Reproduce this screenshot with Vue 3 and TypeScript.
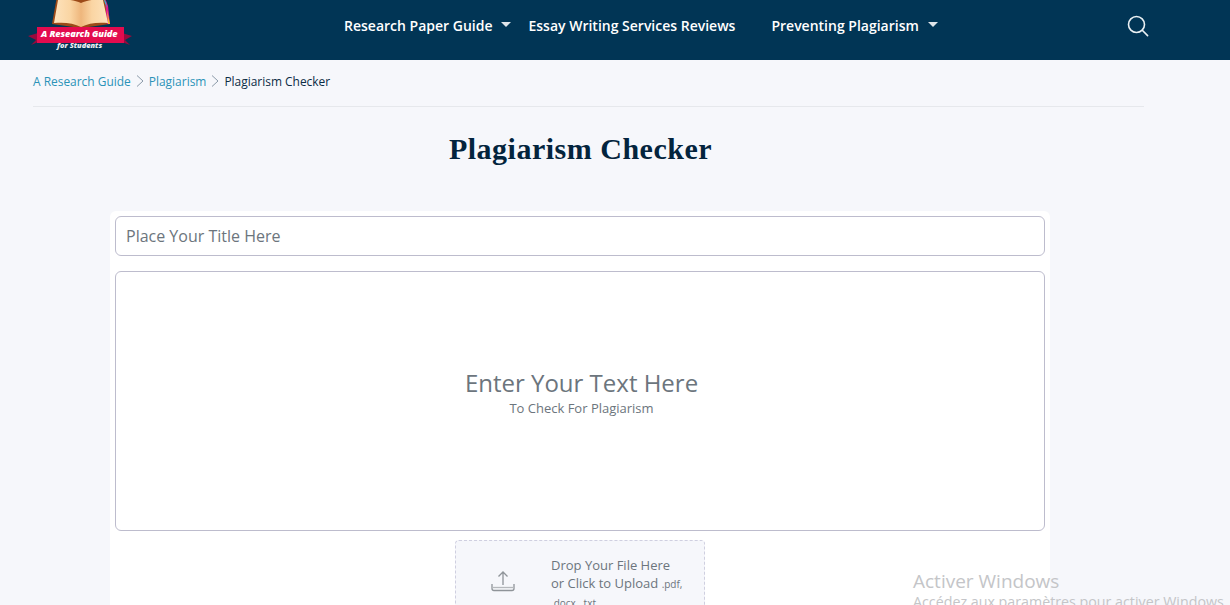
<script setup lang="ts">
interface NavItem { label: string; caret: boolean }
const nav: NavItem[] = [
  { label: 'Research Paper Guide', caret: true },
  { label: 'Essay Writing Services Reviews', caret: false },
  { label: 'Preventing Plagiarism', caret: true },
]
</script>

<template>
  <div class="page">
    <header class="top">
      <a class="logo">
        <svg class="logo-art" width="106" height="50" viewBox="0 0 106 50">
          <defs>
            <linearGradient id="pageLeft" x1="0" y1="0" x2="1" y2="0">
              <stop offset="0" stop-color="#fde3bd" />
              <stop offset="0.6" stop-color="#fad5a3" />
              <stop offset="1" stop-color="#eeb67c" />
            </linearGradient>
            <linearGradient id="pageRight" x1="0" y1="0" x2="1" y2="0">
              <stop offset="0" stop-color="#eeb67c" />
              <stop offset="0.4" stop-color="#fad5a3" />
              <stop offset="1" stop-color="#fde3bd" />
            </linearGradient>
          </defs>
          <path d="M29 -4 L77 -4 L82 24 L53 28 L24 24 Z" fill="#9c4a18" />
          <path d="M77 -2 L80 6 L82 24 L79 24 Z" fill="#e2188f" />
          <path d="M75 -2 L78 2 L79 8 Z" fill="#33b5d8" />
          <path d="M79 10 L82 24 L80 24 Z" fill="#f2c230" />
          <path d="M30 0 C38 -1 47 0 53 3 L53 27 C46 23 36 22 26 23 Z" fill="url(#pageLeft)" />
          <path d="M53 3 C59 0 68 -1 75 0 L80 23 C70 22 60 23 53 27 Z" fill="url(#pageRight)" />
          <path d="M0 36 L10 33 L10 42 L3 45 L8 40 Z" fill="#99093c" />
          <path d="M104 36 L94 33 L94 42 L102 45 L97 40 Z" fill="#99093c" />
          <rect x="9" y="27" width="87" height="16" fill="#e30b4e" />
        </svg>
        <span class="logo-title">A Research Guide</span>
        <span class="logo-sub">for Students</span>
      </a>
      <nav class="nav">
        <a v-for="item in nav" :key="item.label" class="nav-link">
          {{ item.label }}
          <i v-if="item.caret" class="caret"></i>
        </a>
      </nav>
      <svg class="search" width="22" height="22" viewBox="0 0 22 22" fill="none" stroke="#eaf0f3" stroke-width="1.6">
        <circle cx="9.5" cy="9.5" r="8" />
        <path d="M15.3 15.3 L20.6 20.6" stroke-linecap="round" />
      </svg>
    </header>

    <main class="content">
      <div class="crumbs">
        <a>A Research Guide</a>
        <svg class="sep" width="8" height="12" viewBox="0 0 8 12" fill="none" stroke="#8b9aa8"><path d="M1 .5 L7 6 L1 11.5" /></svg>
        <a>Plagiarism</a>
        <svg class="sep" width="8" height="12" viewBox="0 0 8 12" fill="none" stroke="#8b9aa8"><path d="M1 .5 L7 6 L1 11.5" /></svg>
        <span>Plagiarism Checker</span>
      </div>
      <h1 class="title">Plagiarism Checker</h1>
      <section class="card">
        <div class="field">Place Your Title Here</div>
        <div class="area">
          <div class="area-main">Enter Your Text Here</div>
          <div class="area-sub">To Check For Plagiarism</div>
        </div>
        <div class="upload">
          <svg class="up-icon" width="26" height="22" viewBox="0 0 26 22" fill="none" stroke="#8f9499" stroke-width="1.3">
            <path d="M13 15 V2 M8.5 6.5 L13 2 L17.5 6.5" />
            <path d="M2 14 V18.5 C2 20 3 20.5 4 20.5 H22 C23 20.5 24 20 24 18.5 V14" />
            <path d="M2 17.5 H24" stroke="#b5b8bc" />
          </svg>
          <div class="up-text">
            Drop Your File Here<br />or Click to Upload <small>.pdf,<br />.docx, .txt</small>
          </div>
        </div>
      </section>
    </main>

    <div class="activate">
      <div class="act-1">Activer Windows</div>
      <div class="act-2">Accédez aux paramètres pour activer Windows.</div>
    </div>
  </div>
</template>

<style>
html, body { margin: 0; background: #f6f7fb; }
</style>

<style scoped>
.page {
  position: relative;
  height: 605px;
  overflow: hidden;
  background: #f6f7fb;
  font-family: "Open Sans", "Noto Sans", sans-serif;
}
.top {
  height: 60px;
  background: #013555;
  display: flex;
  align-items: center;
  position: relative;
}
.logo {
  position: relative;
  width: 106px;
  height: 50px;
  margin: 0 0 10px 28px;
  align-self: flex-end;
  flex: none;
}
.logo-art { display: block; overflow: hidden; }
.logo-title {
  position: absolute;
  left: 13px;
  top: 28px;
  font: italic 800 9.2px/12px "Open Sans", sans-serif;
  color: #fff;
  white-space: nowrap;
  letter-spacing: -0.1px;
}
.logo-sub {
  position: absolute;
  left: 29px;
  top: 41px;
  font: italic 800 7.4px/9px "Open Sans", sans-serif;
  color: #e8edf1;
  white-space: nowrap;
}
.nav {
  display: flex;
  margin-left: 210px;
  gap: 36px;
}
.nav-link {
  display: flex;
  align-items: center;
  font-size: 14px;
  font-weight: 600;
  line-height: 20px;
  color: #fff;
  white-space: nowrap;
  margin-top: -8px;
}
.caret {
  width: 0;
  height: 0;
  margin: -3px 0 0 9px;
  border-left: 5.5px solid transparent;
  border-right: 5.5px solid transparent;
  border-top: 5.5px solid #dfe5ea;
}
.nav-link:first-child .caret { margin-right: -19px; }
.search { position: absolute; left: 1127px; top: 15px; }
.content { padding: 0 86px 0 33px; }
.crumbs {
  box-sizing: border-box;
  height: 47px;
  padding-bottom: 4px;
  display: flex;
  align-items: center;
  gap: 5px;
  border-bottom: 1px solid #e6e8ec;
  font-size: 11.95px;
  color: #0b2c45;
  white-space: nowrap;
}
.crumbs a { color: #2b93b8; }
.title {
  margin: 24px 0 0;
  padding-right: 16px;
  height: 80px;
  text-align: center;
  font: 700 30px/36px "Liberation Serif", serif;
  letter-spacing: 0.5px;
  color: #03243d;
}
.card {
  width: 940px;
  margin-left: 77px;
  box-sizing: border-box;
  padding: 5px;
  background: #fff;
  border-radius: 6px;
  height: 500px;
}
.field, .area {
  box-sizing: border-box;
  border: 1px solid #bdbccd;
  border-radius: 6px;
  background: #fff;
}
.field {
  height: 40px;
  padding: 0 10px;
  font-size: 16px;
  line-height: 38px;
  color: #6c757d;
}
.area {
  height: 260px;
  margin-top: 15px;
  padding-top: 97px;
  text-align: center;
  color: #6c757d;
}
.area-main { font-size: 24px; line-height: 28px; padding-left: 3px; }
.area-sub { font-size: 13px; line-height: 20px; margin-top: 1px; padding-left: 3px; }
.upload {
  box-sizing: border-box;
  width: 250px;
  height: 100px;
  margin: 9px auto 0;
  padding: 15px 10px 0 35px;
  display: flex;
  gap: 34px;
  background: #f6f7fb;
  border: 1px dashed #cfcfe0;
  border-radius: 4px;
}
.up-icon { flex: none; margin-top: 14px; margin-left: -1px; }
.up-text {
  font-size: 13px;
  line-height: 18px;
  color: #6c757d;
  margin-left: 1px;
}
.up-text small { font-size: 10px; }
.activate {
  position: absolute;
  left: 913px;
  top: 569px;
  color: #c4c5c8;
  white-space: nowrap;
}
.act-1 { font-size: 19px; line-height: 25px; }
.act-2 { font-size: 14.25px; line-height: 18px; margin-top: -1px; }
</style>
